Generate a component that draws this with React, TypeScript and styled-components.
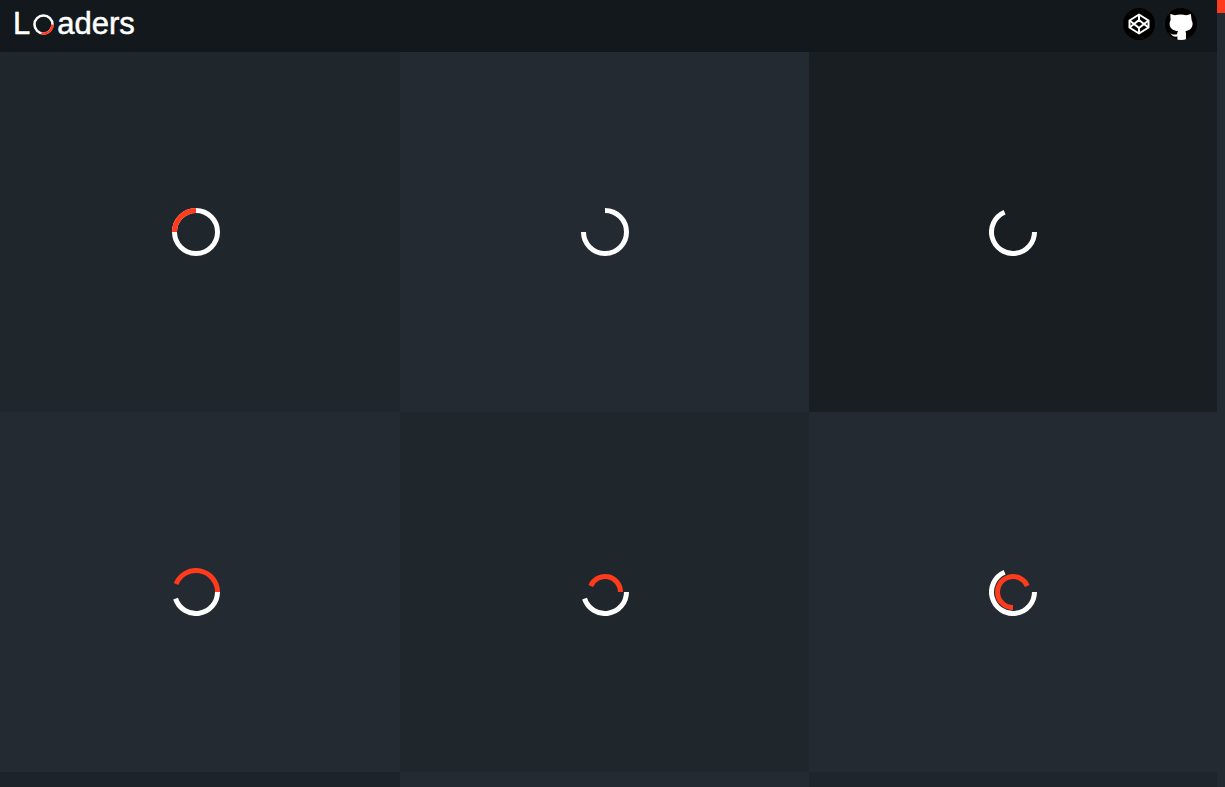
import React from 'react';
import styled, { createGlobalStyle } from 'styled-components';

const Global = createGlobalStyle`
  html, body { margin: 0; padding: 0; height: 100%; background: #1f262c; overflow: hidden; }
  #root { height: 100%; }
`;
const Page = styled.div`display: flex; height: 787px; overflow: hidden;`;
const Main = styled.main`flex: 1; min-width: 0; display: flex; flex-direction: column;`;
const Header = styled.header`
  flex: none; height: 52px; background: #12181c; display: flex; align-items: center;
  justify-content: space-between; padding: 0 20px 4px 13px; box-sizing: border-box;
`;
const Logo = styled.h1`
  margin: 0 0 2px; display: flex; align-items: center; color: #fff;
  font: 400 31px/1 "Liberation Sans", Arial, sans-serif;
  -webkit-text-stroke: 0.5px #fff;
`;
const LogoRing = styled.svg`width: 21px; height: 21px; margin: 3px 3px 0 3px; flex: none;`;
const Links = styled.nav`display: flex; gap: 10px;`;
const Badge = styled.a`
  width: 32px; height: 32px; border-radius: 50%; background: #000;
  display: flex; align-items: center; justify-content: center; overflow: hidden;
`;
const Grid = styled.section`
  flex: 1; display: grid; grid-template-columns: 400px 409px 408px; grid-auto-rows: 360px;
`;
const Cell = styled.div<{ $bg: string; $trim?: boolean }>`
  background: ${p => p.$bg}; display: flex; align-items: center; justify-content: center;
  padding-right: ${p => (p.$trim ? 8 : 0)}px;
`;
const Spinner = styled.svg`width: 48px; height: 48px; display: block;`;
const Track = styled.div`flex: none; width: 8px; background: #232a31;`;
const Thumb = styled.div`height: 13px; background: #ff3b1c;`;

const RED = '#ff3b1c';
const WHITE = '#ffffff';

const pt = (r: number, a: number, c: number) => {
  const t = ((a - 90) * Math.PI) / 180;
  return `${(c + r * Math.cos(t)).toFixed(3)} ${(c + r * Math.sin(t)).toFixed(3)}`;
};
const arc = (r: number, from: number, to: number, c = 24) => {
  const span = ((to - from) % 360 + 360) % 360;
  if (span === 0) return `M ${pt(r, 0, c)} A ${r} ${r} 0 1 1 ${pt(r, 180, c)} A ${r} ${r} 0 1 1 ${pt(r, 0, c)}`;
  return `M ${pt(r, from, c)} A ${r} ${r} 0 ${span > 180 ? 1 : 0} 1 ${pt(r, to, c)}`;
};

type Seg = { r: number; from: number; to: number; color: string };
const Ring = ({ segs }: { segs: Seg[] }) => (
  <Spinner viewBox="0 0 48 48">
    {segs.map((s, i) => (
      <path key={i} d={arc(s.r, s.from, s.to)} fill="none" stroke={s.color} strokeWidth={5} />
    ))}
  </Spinner>
);

const R = 21.5;
const cells: { bg: string; trim?: boolean; segs: Seg[] }[] = [
  { bg: '#1f262c', trim: true, segs: [
    { r: R, from: 0, to: 0, color: WHITE },
    { r: R, from: 270, to: 360, color: RED },
  ] },
  { bg: '#232a32', segs: [{ r: R, from: 0, to: 270, color: WHITE }] },
  { bg: '#191e22', segs: [{ r: R, from: 90, to: 337, color: WHITE }] },
  { bg: '#232a32', trim: true, segs: [
    { r: R, from: 90, to: 252, color: WHITE },
    { r: R, from: 292, to: 90, color: RED },
  ] },
  { bg: '#1f262c', segs: [
    { r: R, from: 90, to: 252, color: WHITE },
    { r: 15.5, from: 293, to: 90, color: RED },
  ] },
  { bg: '#232a32', segs: [
    { r: R, from: 90, to: 337, color: WHITE },
    { r: 15.5, from: 180, to: 67, color: RED },
  ] },
  { bg: '#1c2329', trim: true, segs: [] },
  { bg: '#232a32', segs: [] },
  { bg: '#1e262c', segs: [] },
];

export default function App() {
  return (
    <Page>
      <Global />
      <Main>
        <Header>
          <Logo>
            L
            <LogoRing viewBox="0 0 20 20">
              <circle cx="10" cy="10" r="8.6" fill="none" stroke="#fff" strokeWidth="2.4" />
              <path d="M18.6 10 A8.6 8.6 0 0 1 8 18.4" fill="none" stroke={RED} strokeWidth="2.4" />
            </LogoRing>
            aders
          </Logo>
          <Links>
            <Badge href="#" aria-label="CodePen">
              <svg width="24" height="24" viewBox="0 0 24 24" fill="none" stroke="#fff" strokeWidth="2" strokeLinejoin="round">
                <path d="M12 2.5 21.5 8.5V15.5L12 21.5 2.5 15.5V8.5Z" />
                <path d="M12 8 17 12 12 16 7 12Z" />
                <path d="M12 2.5V8M12 16V21.5M2.5 8.5 7 12 2.5 15.5M21.5 8.5 17 12 21.5 15.5" />
              </svg>
            </Badge>
            <Badge href="#" aria-label="GitHub">
              <svg width="32" height="32" viewBox="0 0 32 32">
                <path fill="#fff" d="M5.3 6 9.9 7.3C11.6 6.7 13.4 6.4 15.6 6.4 17.8 6.4 19.6 6.7 21.3 7.3L25.9 6 26.6 12C27.3 13.3 27.6 14.6 27.6 15.8 27.6 20 24.8 22.6 20.4 23.2 20.9 24 21 25.1 21 26.6V32H12.4V28.6C9.3 29 7.3 28.2 5.3 25.2 6.8 26.3 8.9 27 12 26.2 12.1 24.9 12.5 24 13.2 23.3 7.4 22.6 4.6 20 4.6 15.8 4.6 14.4 5 13.2 5.6 12Z" />
              </svg>
            </Badge>
          </Links>
        </Header>
        <Grid>
          {cells.map((c, i) => (
            <Cell key={i} $bg={c.bg} $trim={c.trim}>
              {c.segs.length > 0 && <Ring segs={c.segs} />}
            </Cell>
          ))}
        </Grid>
      </Main>
      <Track><Thumb /></Track>
    </Page>
  );
}
